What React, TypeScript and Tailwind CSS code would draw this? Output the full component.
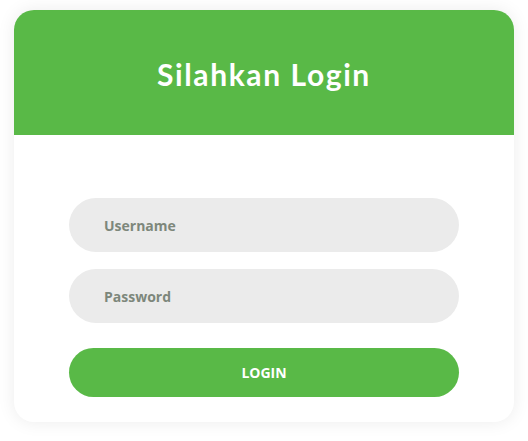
import React from 'react'

export default function App() {
  return (
    <div className="min-h-[441px] w-[528px] bg-white pl-[14px] pt-[10px]">
      <div className="w-[500px] overflow-hidden rounded-[20px] bg-white shadow-[0_0_18px_rgba(0,0,0,0.08)]">
        <div className="flex h-[125px] items-center justify-center bg-[#59b947]">
          <h1 className="pt-[3px] font-['Lato',sans-serif] text-[30px] font-bold tracking-[1.6px] text-white">
            Silahkan Login
          </h1>
        </div>
        <form className="flex flex-col px-[55px] pb-[25px] pt-[63px]" onSubmit={(e) => e.preventDefault()}>
          <input
            type="text"
            placeholder="Username"
            className="h-[54px] rounded-full bg-[#ebebeb] px-[35px] font-['Open_Sans',sans-serif] text-[14px] font-bold text-[#7d877b] outline-none placeholder:text-[#7d877b]"
          />
          <input
            type="password"
            placeholder="Password"
            className="mt-[17px] h-[54px] rounded-full bg-[#ebebeb] px-[35px] font-['Open_Sans',sans-serif] text-[14px] font-bold text-[#7d877b] outline-none placeholder:text-[#7d877b]"
          />
          <button
            type="submit"
            className="mt-[25px] h-[49px] rounded-full bg-[#59b947] font-['Open_Sans',sans-serif] text-[14px] font-bold text-white"
          >
            LOGIN
          </button>
        </form>
      </div>
    </div>
  )
}
